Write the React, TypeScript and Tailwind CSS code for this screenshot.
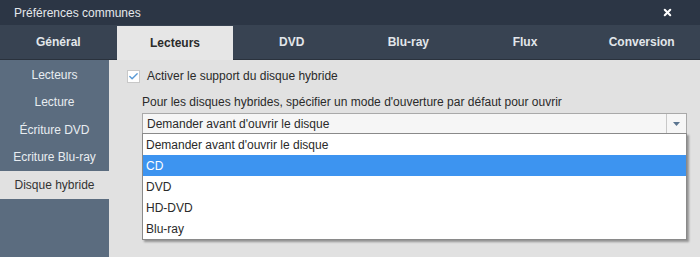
import { Check, X } from 'lucide-react';

const tabs = ['Général', 'Lecteurs', 'DVD', 'Blu-ray', 'Flux', 'Conversion'];
const side = ['Lecteurs', 'Lecture', 'Écriture DVD', 'Ecriture Blu-ray', 'Disque hybride'];
const options = ['Demander avant d\'ouvrir le disque', 'CD', 'DVD', 'HD-DVD', 'Blu-ray'];

export default function App() {
  return (
    <div className="w-[700px] h-[257px] overflow-hidden flex flex-col bg-[#e1e1e1] font-['Liberation_Sans',Arial,sans-serif] text-[12px]">
      {/* title bar */}
      <div className="h-[25px] shrink-0 bg-[#2c3645] flex items-center justify-between pl-[14px] pr-[27px] text-[#e4e8ec]">
        <span className="text-[12px]">Préférences communes</span>
        <X size={11} strokeWidth={4.5} className="text-white" />
      </div>

      {/* tabs */}
      <div className="h-[35px] shrink-0 bg-[#384352] flex border-b border-[#2a323d]">
        {tabs.map((t, i) => (
          <div
            key={t}
            className={`flex-1 flex items-center justify-center font-bold text-[12px] ${
              i === 1 ? 'bg-[#e6e6e6] text-[#2b2b2b] mt-[1px] mb-[-1px]' : 'text-[#e2e6ea]'
            }`}
          >
            {t}
          </div>
        ))}
      </div>

      <div className="flex flex-1 min-h-0">
        {/* sidebar */}
        <div className="w-[109px] shrink-0 bg-[#5b6c7f] flex flex-col pt-[1px]">
          {side.map((s, i) => (
            <div
              key={s}
              className={`h-[27.5px] flex items-center justify-center ${
                i === 4 ? 'bg-[#e1e1e1] text-[#333]' : 'text-[#e8edf1]'
              }`}
            >
              {s}
            </div>
          ))}
        </div>

        {/* content */}
        <div className="flex-1 pl-[33px] pr-[13px] pt-[7px] text-[#2a2a2a]">
          <div className="flex items-center gap-[7px] ml-[-15px]">
            <span className="w-[13px] h-[13px] bg-white border border-[#c8c8c8] flex items-center justify-center">
              <Check size={11} strokeWidth={3} className="text-[#5a9ad6]" />
            </span>
            <span>Activer le support du disque hybride</span>
          </div>
          <div className="mt-[8px]">Pour les disques hybrides, spécifier un mode d'ouverture par défaut pour ouvrir</div>

          <div className="relative mt-[2px]">
            <div className="h-[21px] flex bg-[#f6f6f6] border border-[#a9a9a9]">
              <div className="flex-1 flex items-center pl-[4px]">Demander avant d'ouvrir le disque</div>
              <div className="w-[20px] border-l border-[#c8c8c8] flex items-center justify-center">
                <svg width="7" height="4" viewBox="0 0 7 4">
                  <path d="M0 0H7L3.5 4Z" fill="#5b7590" />
                </svg>
              </div>
            </div>
            <div className="absolute left-0 top-[20px] w-[545px] bg-white border border-[#8a8a8a] shadow-[2px_2px_2px_rgba(0,0,0,0.35)]">
              {options.map((o, i) => (
                <div
                  key={o}
                  className={`h-[21px] flex items-center pl-[3px] ${i === 1 ? 'bg-[#3d94f0] text-white' : ''}`}
                >
                  {o}
                </div>
              ))}
            </div>
          </div>
        </div>
      </div>
    </div>
  );
}
